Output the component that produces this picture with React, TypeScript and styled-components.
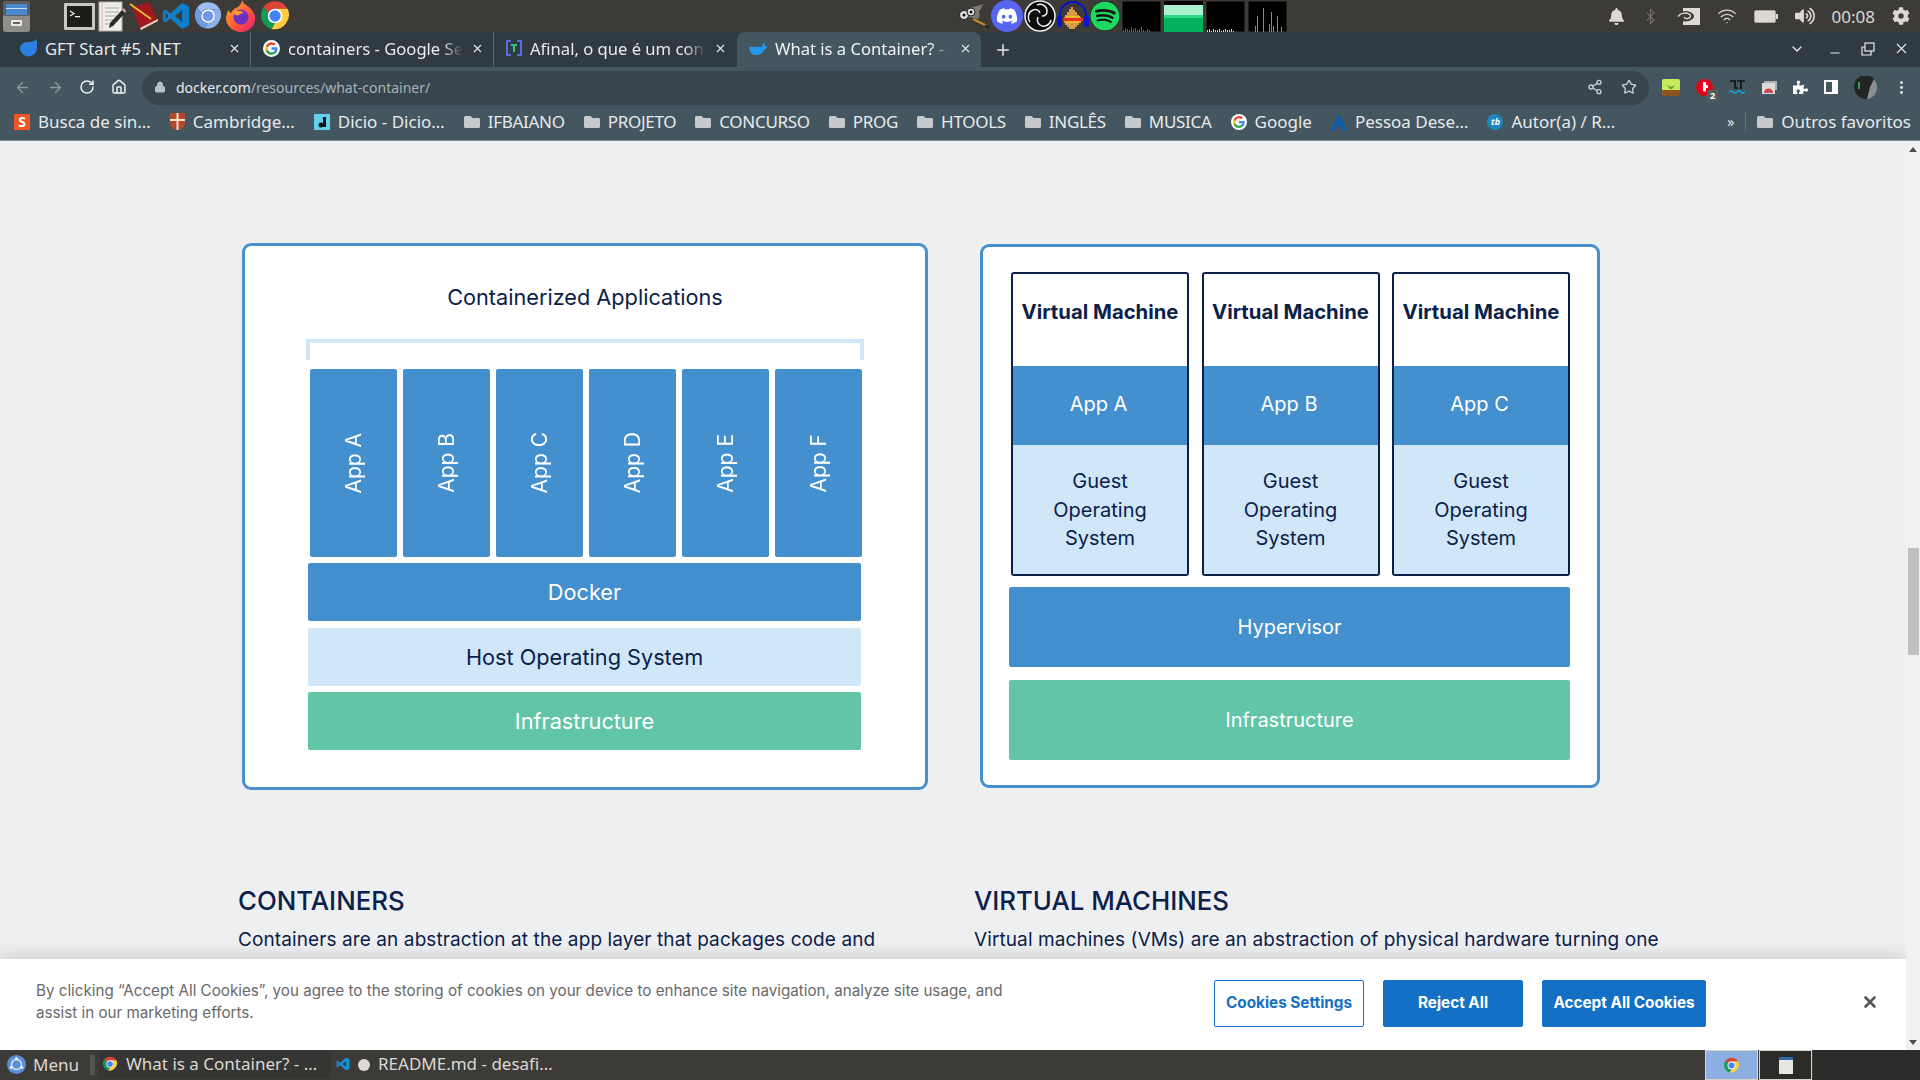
import React from 'react';
import styled, {createGlobalStyle} from 'styled-components';
import {ArrowLeft, ArrowRight, RotateCw, Home, Lock, Share2, Star, Bluetooth, Wifi, X, Plus, ChevronDown, Minus, MoreVertical} from 'lucide-react';
import {FaBell, FaCog, FaDiscord, FaFolder, FaPuzzlePiece, FaSpotify, FaVolumeUp} from 'react-icons/fa';

const uiFont = `"Noto Sans", "Open Sans", sans-serif`;
const pageFont = `Inter, "Open Sans", sans-serif`;

const GlobalStyle = createGlobalStyle`
    html, body {
        margin: 0;
        padding: 0;
        width: 1920px;
        height: 1080px;
        overflow: hidden;
    }
    * {
        box-sizing: border-box;
    }
`

const ChromeLogo = ({size = 32, a = '#db4437', b = '#0f9d58', c = '#ffcd40', d = '#4285f4'}: {size?: number; a?: string; b?: string; c?: string; d?: string}) => (
    <svg width={size} height={size} viewBox="0 0 48 48">
        <path d="M24 2a22 22 0 0 1 19 11H24a11 11 0 0 0-10 6L6.500 10.500A22 22 0 0 1 24 2z" fill={a} />
        <path d="M6.500 10.500L14 19a11 11 0 0 0 10 16l-5 8.600A22 22 0 0 1 6.500 10.500z" fill={b} />
        <path d="M43 13a22 22 0 0 1-24 30.600L24 35a11 11 0 0 0 9-16l-9-6z" fill={c} />
        <circle cx="24" cy="24" r="11" fill="#fff" />
        <circle cx="24" cy="24" r="8.500" fill={d} />
    </svg>
);

const GoogleLogo = ({size = 18}: {size?: number}) => (
    <svg width={size} height={size} viewBox="0 0 48 48">
        <circle cx="24" cy="24" r="24" fill="#fff" />
        <path d="M41 24.500c0-1.300-.1-2.500-.3-3.700H24v7h9.600a8.200 8.200 0 0 1-3.600 5.400v4.500h5.800c3.400-3.100 5.200-7.700 5.200-13.200z" fill="#4285f4" />
        <path d="M24 42c4.900 0 8.900-1.600 11.800-4.300L30 33.200c-1.600 1.100-3.600 1.700-6 1.700-4.600 0-8.500-3.100-9.900-7.300h-6v4.600A18 18 0 0 0 24 42z" fill="#34a853" />
        <path d="M14.100 27.600a10.800 10.800 0 0 1 0-6.900v-4.600h-6a18 18 0 0 0 0 16.100z" fill="#fbbc05" />
        <path d="M24 13.100c2.600 0 5 .9 6.800 2.700l5.100-5.100A18 18 0 0 0 8.100 16.100l6 4.600c1.400-4.200 5.300-7.600 9.900-7.600z" fill="#ea4335" />
    </svg>
);

const CabinetIcon = () => (
    <svg width="30" height="32" viewBox="0 0 30 32">
        <rect x="2" y="1" width="27" height="31" rx="3" fill="#8f8d88" />
        <rect x="2" y="1" width="27" height="15" rx="2" fill="#5f5e5a" />
        <rect x="5" y="4" width="21" height="11" fill="#4a88cf" />
        <rect x="5" y="8" width="21" height="1" fill="#c4dcf5" />
        <rect x="10" y="20" width="11" height="6" rx="1" fill="#ece9e3" />
        <rect x="12" y="22" width="7" height="2" fill="#66645f" />
    </svg>
);

const TerminalIcon = () => (
    <svg width="31" height="27" viewBox="0 0 31 27">
        <rect width="31" height="27" rx="1" fill="#c9c7c1" />
        <rect x="3" y="3" width="25" height="21" fill="#1d1d1b" />
        <path d="M6 8l4 2.500L6 13" stroke="#eee" strokeWidth="1.200" fill="none" />
        <rect x="11" y="13" width="5" height="1.300" fill="#eee" />
    </svg>
);

const EditorIcon = () => (
    <svg width="28" height="31" viewBox="0 0 28 31">
        <rect x="1" y="1" width="23" height="29" fill="#efede8" stroke="#b4b2ad" />
        <path d="M4 1v29" stroke="#e4b4b4" />
        <path d="M7 7h14M7 11h14M7 15h12M7 19h9M7 23h7" stroke="#aaa" />
        <path d="M11 27l1-5L24 9l3 3-12 13z" fill="#2a2a28" />
        <path d="M24 9l2-2 2 3-1 2z" fill="#dd9ab0" />
    </svg>
);

const BookIcon = () => (
    <svg width="30" height="30" viewBox="0 0 30 30">
        <path d="M3 6L20 1l9 19-17 9z" fill="#a3181f" />
        <path d="M12 29l17-9v-2L11 27z" fill="#e6d8c8" />
        <path d="M1 3l21 15" stroke="#e4b92e" strokeWidth="2" />
    </svg>
);

const VsCodeIcon = ({size = 28, color = '#0f7fcc'}: {size?: number; color?: string}) => (
    <svg width={size} height={size} viewBox="0 0 28 28">
        <path d="M20 1l7 3.400v19.200L20 27 8.500 16.500 3.500 20.500 1 19V9l2.500-1.500 5 4z" fill={color} />
        <path d="M20 8l-7 6 7 6z" fill="#3c3b37" />
        <path d="M3.500 11v6l3-3z" fill="#3c3b37" />
    </svg>
);

const FirefoxIcon = () => (
    <svg width="30" height="32" viewBox="0 0 30 32">
        <defs>
            <linearGradient id="fx" x1="0" y1="0" x2="1" y2="1">
                <stop offset="0" stopColor="#ffb62e" />
                <stop offset=".55" stopColor="#ff5a36" />
                <stop offset="1" stopColor="#e21587" />
            </linearGradient>
        </defs>
        <path d="M16 0c1 4 5 5 8 8 4 4 6 8 5 13-1 6-7 11-14 11S1 27 0 20c0-4 1-8 3-10 0 2 1 3 2 3 1-3 4-5 7-6 2-2 4-4 4-7z" fill="url(#fx)" />
        <circle cx="15" cy="17" r="7.500" fill="#6d2fc0" />
        <path d="M7 13c3-3 8-3 11 0-3 0-4 1-5 2-2 1-4 0-6-2z" fill="#ff9a2e" />
    </svg>
);

const GimpIcon = () => (
    <svg width="32" height="28" viewBox="0 0 32 28">
        <path d="M6 10C10 5 18 5 25 2c-1 3-2 5-4 7 1 3 1 6-1 8L16 16l-6-1z" fill="#7d7a70" />
        <circle cx="6" cy="13" r="4.500" fill="#ddd" stroke="#222" />
        <circle cx="13" cy="10" r="4" fill="#ddd" stroke="#222" />
        <circle cx="6" cy="13" r="1.500" fill="#111" />
        <circle cx="13" cy="10" r="1.500" fill="#111" />
        <path d="M15 17l14 7" stroke="#c98a2e" strokeWidth="2" />
        <path d="M27 23l4 3" stroke="#222" strokeWidth="2" />
    </svg>
);

const ObsIcon = () => (
    <svg width="32" height="32" viewBox="0 0 32 32">
        <circle cx="16" cy="16" r="15" fill="#0c0c0c" stroke="#eee" strokeWidth="1.500" />
        <g fill="none" stroke="#eee" strokeWidth="1.500">
            <path d="M13 5c5-2 10 1 10 6 0 3-2 5-5 5" />
            <path d="M27 20c-1 5-7 8-11 5-3-2-3-5-2-8" />
            <path d="M6 22c-3-4-2-10 3-12 3-1 6 0 7 3" />
        </g>
    </svg>
);

const AudacityIcon = () => (
    <svg width="32" height="32" viewBox="0 0 32 32">
        <path d="M3 22V15a13 13 0 0 1 26 0v7" fill="none" stroke="#0a14c8" strokeWidth="2" />
        <rect x="0" y="15" width="5" height="12" rx="2.500" fill="#0a14c8" />
        <rect x="27" y="15" width="5" height="12" rx="2.500" fill="#0a14c8" />
        <path d="M7 17h1v-2h2v-3h2V9h2V7h2v3h2v2h2v3h2v2h2v6h-2v2h-2v2h-2v2h-6v-2h-2v-2H8v-2H7z" fill="#d99a4a" />
        <rect x="6" y="18" width="20" height="3" fill="#f03020" />
        <rect x="9" y="16" width="14" height="1.500" fill="#f0c020" />
        <rect x="9" y="21.500" width="14" height="1.500" fill="#f0c020" />
    </svg>
);

const Monitor = ({bars, color, width}: {bars: number[]; color: string; width: number}) => (
    <svg width="39" height="31" viewBox="0 0 39 31">
        <rect width="39" height="31" fill="#000" stroke="#3c3b37" />
        {bars.map((h, i) => (
            <rect key={i} x={1 + i * (width + (width > 1 ? 0 : 1))} y={31 - h} width={width} height={h} fill={color} />
        ))}
    </svg>
);

const NetMonitor = () => (
    <svg width="39" height="31" viewBox="0 0 39 31">
        <rect width="39" height="31" fill="#000" />
        <rect y="4" width="39" height="10" fill="#a9f2cc" />
        <rect y="14" width="39" height="3" fill="#2fd888" />
        <rect y="17" width="39" height="14" fill="#04b25c" />
    </svg>
);

const NvidiaIcon = () => (
    <svg width="24" height="17" viewBox="0 0 24 17">
        <rect x="7" width="17" height="17" fill="#ddd8d0" />
        <path d="M0 8.500C4 3 10 2 14 4c3 1 4 3 4 4.500S16 12 13 13c-4 1-9 1-13-4.500z" fill="#3c3b37" />
        <path d="M2 8.500C5 5 10 4 13 6c2 1 2 3 0 4s-4 1-5-1" fill="none" stroke="#ddd8d0" strokeWidth="1.400" />
    </svg>
);

const BatteryIcon = () => (
    <svg width="24" height="13" viewBox="0 0 24 13">
        <rect x=".5" y=".5" width="21" height="12" rx="1.500" fill="#ddd8d0" stroke="#aaa69e" />
        <rect x="22" y="4" width="2" height="5" fill="#ddd8d0" />
    </svg>
);

const PlantIcon = () => (
    <svg width="18" height="17" viewBox="0 0 18 17">
        <rect width="18" height="12" y="0" rx="2" fill="#c8e85e" />
        <rect y="11" width="18" height="6" rx="1.500" fill="#8a5520" />
        <path d="M5 6l4 2 4-2-3 4H8z" fill="#5f9e33" />
    </svg>
);

const RedExtIcon = () => (
    <ExtBadgeWrap>
        <svg width="17" height="17" viewBox="0 0 17 17">
            <circle cx="8.500" cy="8.500" r="8.500" fill="#e0061a" />
            <path d="M7 3h3v8c0 2-3 2-3 0zM10 6h2v3h-2z" fill="#fff" />
        </svg>
        <ExtBadge>2</ExtBadge>
    </ExtBadgeWrap>
);

const LtIcon = () => (
    <svg width="17" height="15" viewBox="0 0 17 15">
        <path d="M1 1h5v7h3M8 1h8M12 1v8" stroke="#111" strokeWidth="1.600" fill="none" />
        <path d="M0 12q2-2 4 0t4 0 4 0 4 0" stroke="#19a3e0" strokeWidth="1.400" fill="none" />
    </svg>
);

const StoreIcon = () => (
    <svg width="15" height="13" viewBox="0 0 15 13">
        <rect x="2" width="13" height="9" fill="#aab0b4" />
        <rect y="2" width="13" height="11" fill="#dcdcdc" />
        <path d="M2 12a4.500 4.500 0 0 1 9 0z" fill="#db4437" />
        <path d="M5 12a1.500 1.500 0 0 1 3 0z" fill="#4285f4" />
    </svg>
);

const SidePanelIcon = () => (
    <svg width="14" height="14" viewBox="0 0 14 14">
        <rect width="14" height="14" fill="#fff" />
        <rect x="2" y="2" width="6" height="10" fill="#44565f" />
    </svg>
);

const Avatar = () => (
    <svg width="23" height="23" viewBox="0 0 23 23">
        <circle cx="11.500" cy="11.500" r="11.500" fill="#8b8f8e" />
        <path d="M0 11a11.500 11.500 0 0 1 20-8l-4 8-3 12H10C4 22 0 17 0 11z" fill="#232523" />
        <path d="M5 6v7" stroke="#3fc46c" strokeWidth="1.500" />
    </svg>
);

const MenuLogo = () => (
    <svg width="19" height="19" viewBox="0 0 19 19">
        <circle cx="9.500" cy="9.500" r="9.500" fill="#5a8fd6" />
        <circle cx="9.500" cy="9.500" r="5" fill="none" stroke="#dfe9f7" strokeWidth="1.400" />
        <circle cx="9.500" cy="3.500" r="1.300" fill="#fff" />
        <circle cx="4" cy="12.500" r="1.300" fill="#fff" />
        <circle cx="15" cy="12.500" r="1.300" fill="#fff" />
    </svg>
);

const WindowIcon = () => (
    <svg width="14" height="17" viewBox="0 0 14 17">
        <rect width="14" height="17" fill="#e6e6e2" />
        <rect width="14" height="3" fill="#3465a4" />
    </svg>
);

const DockerFavicon = () => (
    <svg width="18" height="14" viewBox="0 0 18 14">
        <path d="M0 6h13c0-2 1-4 2-4 1 1 1 2 1 3 1 0 2 0 2 1-1 2-2 2-3 3-1 3-4 5-8 5-4 0-7-3-7-8z" fill="#2496ed" />
    </svg>
);

const tabs = [
    {title: 'GFT Start #5 .NET', icon: <GftFav />},
    {title: 'containers - Google Search', icon: <GoogleLogo size={17} />, fade: true},
    {title: 'Afinal, o que é um container', icon: <AfinalFav />, fade: true},
];

function GftFav() {
    return (
        <svg width="17" height="18" viewBox="0 0 17 18">
            <path d="M17 0v9a8.500 8.500 0 0 1-17 0C0 4 6 3 9 3c3 0 6-1 8-3z" fill="#2b7fe0" />
        </svg>
    );
}

function AfinalFav() {
    return (
        <svg width="16" height="16" viewBox="0 0 16 16">
            <path d="M5 1H1v14h4M11 1h4v14h-4" fill="none" stroke="#5c6ae0" strokeWidth="2" />
            <path d="M5 4h6v2H9v6H7V6H5z" fill="#35c48a" />
        </svg>
    );
}

const folders = ['IFBAIANO', 'PROJETO', 'CONCURSO', 'PROG', 'HTOOLS', 'INGLÊS', 'MUSICA'];

function Folder() {
    return <FaFolder size={16} color="#c6cacc" />;
}

const appsLeft = ['App A', 'App B', 'App C', 'App D', 'App E', 'App F'];
const machines = ['App A', 'App B', 'App C'];

const App = () => {
    return (
        <Screen>
            <GlobalStyle />
            <TopPanel>
                <Launchers>
                    <CabinetIcon />
                    <LauncherRow>
                        <TerminalIcon />
                        <EditorIcon />
                        <BookIcon />
                        <VsCodeIcon />
                        <ChromeLogo size={30} a="#9dbdf2" b="#6f9be6" c="#8db0ee" d="#6f9be6" />
                        <FirefoxIcon />
                        <ChromeLogo size={32} />
                    </LauncherRow>
                </Launchers>
                <Applets>
                    <GimpIcon />
                    <RoundBlue><FaDiscord size={22} color="#fff" /></RoundBlue>
                    <ObsIcon />
                    <AudacityIcon />
                    <FaSpotify size={30} color="#1ed760" style={{background: '#111', borderRadius: '50%'}} />
                    <MonitorRow>
                        <Monitor color="#0f7dc2" width={1} bars={[2, 4, 3, 2, 5, 3, 4, 2, 3, 5, 2, 1, 3, 2]} />
                        <NetMonitor />
                        <Monitor color="#f0e02c" width={1} bars={[2, 3, 1, 3, 2, 2, 3, 1, 2, 3, 2, 2, 3, 1]} />
                        <Monitor color="#f07000" width={1} bars={[0, 0, 0, 6, 16, 0, 0, 24, 0, 0, 8, 20, 6, 0, 16, 0, 5]} />
                    </MonitorRow>
                </Applets>
                <Tray>
                    <FaBell size={17} color="#ddd8d0" />
                    <Bluetooth size={17} color="#77746e" strokeWidth={1.5} />
                    <NvidiaIcon />
                    <Wifi size={20} color="#ddd8d0" strokeWidth={1.5} />
                    <BatteryIcon />
                    <FaVolumeUp size={20} color="#ddd8d0" />
                    <Clock>00:08</Clock>
                    <FaCog size={18} color="#ddd8d0" />
                </Tray>
            </TopPanel>

            <TabStrip>
                {tabs.map((tab, i) => (
                    <Tab key={tab.title} $divider={i < 2}>
                        {tab.icon}
                        <TabTitle $fade={tab.fade}>{tab.title}</TabTitle>
                        <X size={13} color="#e8eaed" strokeWidth={2} />
                    </Tab>
                ))}
                <ActiveTab>
                    <DockerFavicon />
                    <TabTitle $fade>What is a Container? - Docker</TabTitle>
                    <X size={13} color="#e8eaed" strokeWidth={2} />
                </ActiveTab>
                <NewTab><Plus size={18} color="#e8eaed" strokeWidth={2} /></NewTab>
                <WindowControls>
                    <ChevronDown size={16} color="#e8eaed" style={{marginRight: 5}} />
                    <Minus size={14} color="#e8eaed" style={{marginTop: 8, marginRight: 1}} />
                    <RestoreIcon />
                    <X size={17} color="#e8eaed" strokeWidth={1.6} />
                </WindowControls>
            </TabStrip>

            <Toolbar>
                <NavIcons>
                    <ArrowLeft size={17} color="#8b99a1" />
                    <ArrowRight size={17} color="#8b99a1" />
                    <RotateCw size={16} color="#f1f3f4" strokeWidth={2.2} />
                    <Home size={16} color="#f1f3f4" strokeWidth={2.2} />
                </NavIcons>
                <Omnibox>
                    <Lock size={12} color="#b8c0c5" fill="#b8c0c5" />
                    <Url>docker.com<UrlPath>/resources/what-container/</UrlPath></Url>
                    <OmniActions>
                        <Share2 size={16} color="#c8ced2" />
                        <Star size={16} color="#c8ced2" />
                    </OmniActions>
                </Omnibox>
                <Extensions>
                    <PlantIcon />
                    <RedExtIcon />
                    <LtIcon />
                    <StoreIcon />
                    <FaPuzzlePiece size={15} color="#fff" />
                    <SidePanelIcon />
                    <Avatar />
                    <MoreVertical size={17} color="#f1f3f4" />
                </Extensions>
            </Toolbar>

            <BookmarksBar>
                <BookmarkRow>
                    <Bookmark><SmallSquare>S</SmallSquare>Busca de sin…</Bookmark>
                    <Bookmark><CrestIcon />Cambridge…</Bookmark>
                    <Bookmark><DicioIcon />Dicio - Dicio…</Bookmark>
                    {folders.map(f => <FolderBookmark key={f}><Folder />{f}</FolderBookmark>)}
                    <Bookmark><GoogleLogo size={16} />Google</Bookmark>
                    <Bookmark><PessoaIcon />Pessoa Dese…</Bookmark>
                    <Bookmark><TbIcon>tb</TbIcon>Autor(a) / R…</Bookmark>
                </BookmarkRow>
                <BookmarkEnd>
                    <Overflow>»</Overflow>
                    <Bookmark><Folder />Outros favoritos</Bookmark>
                </BookmarkEnd>
            </BookmarksBar>

            <Viewport>
                <PageArea>
                    <Diagrams>
                        <ContainerCard>
                            <CardTitle>Containerized Applications</CardTitle>
                            <Bracket />
                            <Stack>
                                <AppColumns>
                                    {appsLeft.map(a => <AppColumn key={a}><VerticalLabel>{a}</VerticalLabel></AppColumn>)}
                                </AppColumns>
                                <Layer $kind="blue">Docker</Layer>
                                <Layer $kind="light">Host Operating System</Layer>
                                <Layer $kind="green">Infrastructure</Layer>
                            </Stack>
                        </ContainerCard>
                        <VmCard>
                            <VmGrid>
                                {machines.map(m => (
                                    <Vm key={m}>
                                        <VmTitle>Virtual Machine</VmTitle>
                                        <VmApp>{m}</VmApp>
                                        <VmOs>Guest<br />Operating<br />System</VmOs>
                                    </Vm>
                                ))}
                            </VmGrid>
                            <VmLayer $kind="blue">Hypervisor</VmLayer>
                            <VmLayer $kind="green">Infrastructure</VmLayer>
                        </VmCard>
                    </Diagrams>
                    <Columns>
                        <TextColumn>
                            <Heading>CONTAINERS</Heading>
                            <Paragraph>Containers are an abstraction at the app layer that packages code and</Paragraph>
                        </TextColumn>
                        <TextColumn>
                            <Heading>VIRTUAL MACHINES</Heading>
                            <Paragraph>Virtual machines (VMs) are an abstraction of physical hardware turning one</Paragraph>
                        </TextColumn>
                    </Columns>
                    <CookieBanner>
                        <CookieText>By clicking “Accept All Cookies”, you agree to the storing of cookies on your device to enhance site navigation, analyze site usage, and assist in our marketing efforts.</CookieText>
                        <CookieButtons>
                            <CookieButton $outline $width={150}>Cookies Settings</CookieButton>
                            <CookieButton $width={140}>Reject All</CookieButton>
                            <CookieButton $width={164}>Accept All Cookies</CookieButton>
                        </CookieButtons>
                        <CookieClose><X size={18} color="#565656" strokeWidth={3.5} /></CookieClose>
                    </CookieBanner>
                </PageArea>
                <Scrollbar>
                    <ScrollArrow />
                    <ScrollThumb />
                    <ScrollArrow $down />
                </Scrollbar>
            </Viewport>

            <TaskBar>
                <MenuButton><MenuLogo />Menu</MenuButton>
                <Handle />
                <TaskItem $active>
                    <ChromeLogo size={16} />
                    What is a Container? - …
                </TaskItem>
                <TaskItem>
                    <VsCodeIcon size={14} color="#1a8fe0" />
                    <ModifiedDot />
                    README.md - desafi…
                </TaskItem>
                <Switcher>
                    <Workspace $current><ChromeLogo size={17} /></Workspace>
                    <Workspace><WindowIcon /></Workspace>
                    <SwitcherTail />
                </Switcher>
            </TaskBar>
        </Screen>
    );
};

const RestoreIcon = () => (
    <svg width="14" height="14" viewBox="0 0 14 14" fill="none" stroke="#e8eaed" strokeWidth="1.200">
        <rect x="4" y="1" width="9" height="8" />
        <path d="M4 5H1v8h9v-4" />
    </svg>
);

const CrestIcon = () => (
    <svg width="15" height="17" viewBox="0 0 15 17">
        <path d="M0 0h15v10a7.500 7 0 0 1-15 0z" fill="#b5462f" />
        <path d="M7.500 0v17M0 7h15" stroke="#f0e3c8" strokeWidth="2" />
    </svg>
);

const DicioIcon = () => (
    <svg width="16" height="16" viewBox="0 0 16 16">
        <rect width="16" height="16" fill="#64d0f0" />
        <rect x="9" y="3" width="3" height="10" fill="#111" />
        <circle cx="7" cy="11" r="2.500" fill="#111" />
    </svg>
);

const PessoaIcon = () => (
    <svg width="16" height="16" viewBox="0 0 16 16">
        <path d="M8 0l8 16h-5L8 9l-3 7H0z" fill="#0a5cad" />
    </svg>
);

const Screen = styled.div`
    width: 1920px;
    height: 1080px;
    display: flex;
    flex-direction: column;
    background: #eeeff1;
    overflow: hidden;
    font-family: ${uiFont};
`

const TopPanel = styled.div`
    height: 32px;
    flex: none;
    display: flex;
    align-items: center;
    background: #3c3b37;
`

const Launchers = styled.div`
    flex: 0 0 958px;
    display: flex;
    align-items: center;
    gap: 33px;
    padding-left: 1px;
`

const LauncherRow = styled.div`
    display: flex;
    align-items: center;
    gap: 3px;
`

const Applets = styled.div`
    display: flex;
    align-items: center;
    gap: 1px;
`

const RoundBlue = styled.div`
    width: 32px;
    height: 32px;
    border-radius: 50%;
    background: #5865f2;
    display: flex;
    align-items: center;
    justify-content: center;
`

const MonitorRow = styled.div`
    display: flex;
    gap: 3px;
    margin-left: 1px;
`

const Tray = styled.div`
    margin-left: auto;
    display: flex;
    align-items: center;
    gap: 17px;
    padding-right: 10px;
`

const Clock = styled.span`
    color: #ddd8d0;
    font: 17px ${uiFont};
`

const TabStrip = styled.div`
    height: 35px;
    flex: none;
    display: flex;
    align-items: stretch;
    padding-left: 8px;
    background: #2f3a42;
`

const Tab = styled.div<{$divider?: boolean}>`
    width: 243px;
    display: flex;
    align-items: center;
    gap: 8px;
    padding: 0 9px 3px 12px;
    color: #e8eaed;
    font-size: 16.600px;
    position: relative;
    border-right: ${p => (p.$divider ? '1px solid #5b666d' : '1px solid transparent')};
    background-clip: padding-box;
`

const ActiveTab = styled(Tab)`
    width: 244px;
    background: #44565f;
    border-radius: 8px 8px 0 0;
    border-right: 0;
    color: #f1f3f4;
`

const TabTitle = styled.span<{$fade?: boolean}>`
    flex: 1;
    white-space: nowrap;
    overflow: hidden;
    ${p => (p.$fade ? 'mask-image: linear-gradient(to right, #000 88%, transparent 100%);' : '')}
`

const NewTab = styled.div`
    width: 44px;
    display: flex;
    align-items: center;
    justify-content: center;
`

const WindowControls = styled.div`
    margin-left: auto;
    display: flex;
    align-items: center;
    gap: 18px;
    padding: 0 10px 2px 0;
`

const Toolbar = styled.div`
    height: 38px;
    flex: none;
    display: flex;
    align-items: flex-start;
    padding-top: 4px;
    background: #44565f;
`

const NavIcons = styled.div`
    width: 142px;
    height: 34px;
    display: flex;
    align-items: center;
    gap: 15.500px;
    padding: 0 0 2px 14px;
`

const Omnibox = styled.div`
    width: 1507px;
    height: 34px;
    display: flex;
    align-items: center;
    padding: 0 11px 2px 12px;
    border-radius: 17px;
    background: #38454e;
`

const Url = styled.span`
    margin-left: 10px;
    color: #e8eaed;
    font-size: 14px;
`

const UrlPath = styled.span`
    color: #a9b3b9;
`

const OmniActions = styled.div`
    margin-left: auto;
    display: flex;
    gap: 18px;
    padding-right: 1px;
`

const Extensions = styled.div`
    flex: 1;
    height: 34px;
    display: flex;
    align-items: center;
    gap: 16px;
    padding: 0 0 2px 13px;
`

const ExtBadgeWrap = styled.div`
    position: relative;
    display: flex;
`

const ExtBadge = styled.span`
    position: absolute;
    right: -5px;
    bottom: -5px;
    width: 11px;
    height: 11px;
    background: #5a5a5a;
    color: #fff;
    font: 700 9px/11px ${uiFont};
    text-align: center;
`

const BookmarksBar = styled.div`
    height: 36px;
    flex: none;
    display: flex;
    align-items: center;
    justify-content: space-between;
    padding: 0 9px 2px 14px;
    background: #44565f;
    border-bottom: 1px solid #7b8a92;
`

const BookmarkRow = styled.div`
    display: flex;
    align-items: center;
    gap: 19px;
`

const Bookmark = styled.div`
    display: flex;
    align-items: center;
    gap: 8px;
    color: #e8eaed;
    font-size: 17px;
    white-space: nowrap;
`

const FolderBookmark = styled(Bookmark)`
    letter-spacing: -0.300px;
`

const BookmarkEnd = styled.div`
    display: flex;
    align-items: center;
`

const Overflow = styled.span`
    color: #e8eaed;
    font-size: 14px;
    padding-right: 11px;
    margin-right: 11px;
    border-right: 1px solid #66767e;
`

const SmallSquare = styled.span`
    width: 16px;
    height: 16px;
    background: #f05522;
    color: #fff;
    font: 700 14px/16px ${uiFont};
    text-align: center;
`

const TbIcon = styled.span`
    width: 16px;
    height: 16px;
    border-radius: 50%;
    background: #1c86bd;
    color: #fff;
    font: italic 700 9px/16px ${uiFont};
    text-align: center;
`

const Viewport = styled.div`
    flex: 1;
    display: flex;
    min-height: 0;
`

const PageArea = styled.div`
    flex: 1;
    position: relative;
    overflow: hidden;
    background: #eeeff1;
    font-family: ${pageFont};
`

const Scrollbar = styled.div`
    width: 14px;
    display: flex;
    flex-direction: column;
    align-items: center;
    justify-content: space-between;
    position: relative;
    background: #f1f1f1;
`

const ScrollArrow = styled.div<{$down?: boolean}>`
    margin: ${p => (p.$down ? '0 0 5px' : '6px 0 0')};
    width: 0;
    height: 0;
    border-left: 4px solid transparent;
    border-right: 4px solid transparent;
    ${p => (p.$down ? 'border-top: 5px solid #505050;' : 'border-bottom: 5px solid #505050;')}
`

const ScrollThumb = styled.div`
    position: absolute;
    top: 407px;
    left: 2px;
    width: 11px;
    height: 107px;
    background: #c0c0c0;
`

const Diagrams = styled.div`
    display: flex;
    align-items: flex-start;
    gap: 52px;
    padding: 102px 0 0 242px;
`

const ContainerCard = styled.div`
    width: 686px;
    height: 547px;
    display: flex;
    flex-direction: column;
    align-items: center;
    padding-top: 36px;
    background: #fff;
    border: 3px solid #4a90cc;
    border-radius: 9px;
`

const CardTitle = styled.div`
    font-size: 21.700px;
    line-height: 30px;
    color: #0b214a;
`

const Bracket = styled.div`
    width: 558px;
    height: 21px;
    margin-top: 27px;
    border: 4px solid #d0e7f9;
    border-bottom: 0;
`

const Stack = styled.div`
    width: 553px;
    margin: 9px 1px 0 0;
    display: flex;
    flex-direction: column;
    gap: 6.500px;
`

const AppColumns = styled.div`
    height: 188px;
    margin: 0 -1px -0.500px 0;
    display: grid;
    grid-template-columns: repeat(6, 1fr);
    gap: 5.500px;
    padding-left: 1.500px;
`

const AppColumn = styled.div`
    display: flex;
    align-items: center;
    justify-content: center;
    background: #448fcd;
    border-radius: 2px;
`

const VerticalLabel = styled.span`
    writing-mode: vertical-rl;
    transform: rotate(180deg);
    color: #fff;
    font-size: 21px;
`

const layerColor = {
    blue: 'background: #448fcd; color: #fff;',
    light: 'background: #d0e7f9; color: #0b214a;',
    green: 'background: #63c5a8; color: #fff;',
};

const Layer = styled.div<{$kind: keyof typeof layerColor}>`
    height: 58px;
    display: flex;
    align-items: center;
    justify-content: center;
    border-radius: 2px;
    font-size: 21.700px;
    ${p => layerColor[p.$kind]}
`

const VmCard = styled.div`
    width: 620px;
    height: 544px;
    margin-top: 1px;
    display: flex;
    flex-direction: column;
    gap: 13px;
    padding: 25px 27px 0 26px;
    background: #fff;
    border: 3px solid #4a90cc;
    border-radius: 9px;
`

const VmGrid = styled.div`
    display: grid;
    grid-template-columns: repeat(3, 178px);
    gap: 12.500px;
    padding-left: 2px;
    margin-bottom: -2px;
`

const Vm = styled.div`
    height: 304px;
    display: flex;
    flex-direction: column;
    border: 2px solid #0b214a;
    border-radius: 3px;
    background: #fff;
    overflow: hidden;
`

const VmTitle = styled.div`
    height: 92px;
    padding-top: 24px;
    text-align: center;
    font-size: 20.300px;
    line-height: 28px;
    font-weight: 700;
    color: #0b214a;
    white-space: nowrap;
`

const VmApp = styled.div`
    height: 79px;
    display: flex;
    align-items: center;
    justify-content: center;
    padding: 0 3px 4px 0;
    background: #448fcd;
    color: #fff;
    font-size: 20px;
`

const VmOs = styled.div`
    flex: 1;
    padding-top: 22px;
    text-align: center;
    background: #d0e7f9;
    color: #0b214a;
    font-size: 20px;
    line-height: 28.500px;
`

const VmLayer = styled(Layer)`
    height: 80px;
    font-size: 20px;
`

const Columns = styled.div`
    display: flex;
    padding: 93px 0 0 238px;
`

const TextColumn = styled.div`
    width: 736px;
`

const Heading = styled.h2`
    margin: 0;
    font-size: 25.800px;
    line-height: 36px;
    font-weight: 500;
    color: #0b214a;
`

const Paragraph = styled.p`
    margin: 5px 0 0;
    font-size: 19px;
    letter-spacing: 0.100px;
    line-height: 32px;
    color: #0b214a;
    white-space: nowrap;
`

const CookieBanner = styled.div`
    position: absolute;
    left: 0;
    right: 0;
    bottom: 0;
    height: 91px;
    display: flex;
    align-items: center;
    padding: 0 0 2px 36px;
    background: #fff;
    box-shadow: 0 0 18px rgba(0, 0, 0, 0.2);
`

const CookieText = styled.p`
    flex: 0 0 1000px;
    margin: 0 178px 3px 0;
    color: #696969;
    font-size: 15.200px;
    line-height: 22px;
`

const CookieButtons = styled.div`
    display: flex;
    gap: 19px;
`

const CookieButton = styled.button<{$outline?: boolean; $width: number}>`
    width: ${p => p.$width}px;
    height: 47px;
    padding: 0 0 3px;
    border: 1px solid #1470c4;
    border-radius: 2px;
    background: ${p => (p.$outline ? '#fff' : '#1470c4')};
    color: ${p => (p.$outline ? '#1470c4' : '#fff')};
    font: 700 15.300px ${pageFont};
`

const CookieClose = styled.div`
    margin: 0 27px 3px auto;
    display: flex;
`

const TaskBar = styled.div`
    height: 30px;
    flex: none;
    display: flex;
    align-items: center;
    padding: 0 0 0 7px;
    background: #3c3b37;
    color: #ddd8d0;
    font-size: 17px;
    line-height: 26px;
`

const MenuButton = styled.div`
    display: flex;
    align-items: center;
    gap: 7px;
    width: 83px;
    padding-bottom: 1px;
`

const Handle = styled.div`
    width: 5px;
    height: 20px;
    background: #55544f;
`

const TaskItem = styled.div<{$active?: boolean}>`
    height: 28px;
    width: ${p => (p.$active ? '232px' : '240px')};
    margin-left: ${p => (p.$active ? '4px' : '5px')};
    display: flex;
    align-items: center;
    gap: 8px;
    padding: 0 0 2px ${p => (p.$active ? '3px' : '0')};
    background: ${p => (p.$active ? '#353533' : 'transparent')};
    white-space: nowrap;
`

const ModifiedDot = styled.span`
    width: 12px;
    height: 12px;
    margin: 2px 0 0;
    border-radius: 50%;
    background: #ddd8d0;
`

const Switcher = styled.div`
    margin-left: auto;
    height: 30px;
    display: flex;
    align-items: stretch;
`

const Workspace = styled.div<{$current?: boolean}>`
    width: 53px;
    margin-right: 1px;
    display: flex;
    align-items: center;
    justify-content: center;
    background: ${p => (p.$current ? '#8caee0' : '#2a2a28')};
    border: 1px solid #d8d4cc;
`

const SwitcherTail = styled.div`
    width: 107px;
    background: #2c2c2a;
`

export default App;
